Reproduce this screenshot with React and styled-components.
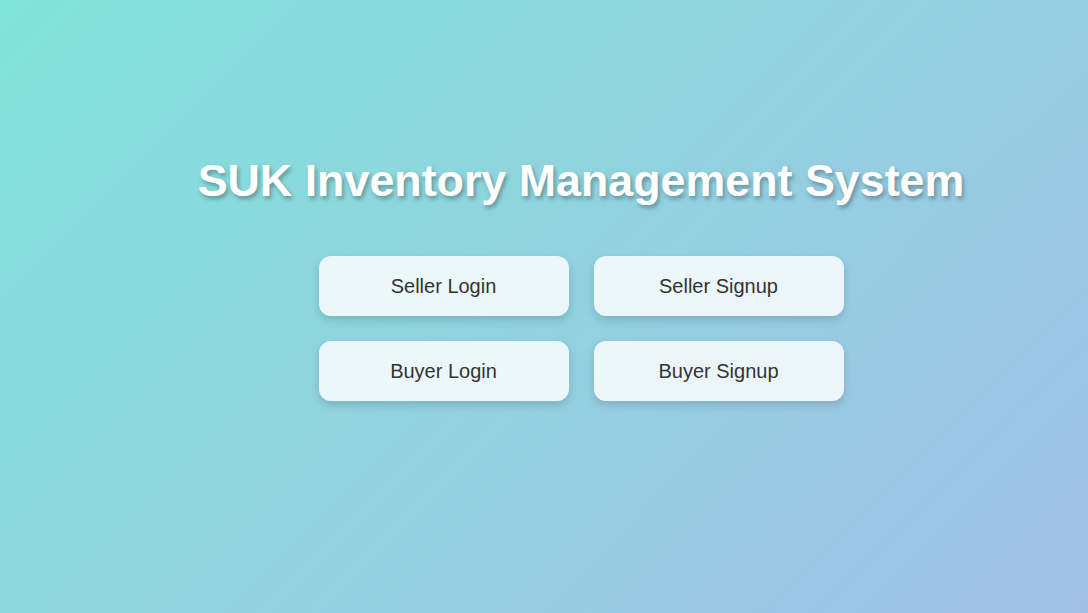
import React from "react";
import styled, { createGlobalStyle } from "styled-components";

const GlobalStyle = createGlobalStyle`
  html, body {
    margin: 0;
    padding: 0;
  }
  body {
    font-family: "Liberation Sans", Arial, sans-serif;
  }
`;

const Page = styled.div`
  min-height: 100vh;
  box-sizing: border-box;
  padding: 154px 0 0 74px;
  background: linear-gradient(135deg, #81e3d9 0%, #a2c0e6 100%);
  display: flex;
  flex-direction: column;
  align-items: center;
`;

const Title = styled.h1`
  margin: 0;
  font-size: 44.8px;
  line-height: 52px;
  font-weight: bold;
  color: #ffffff;
  text-align: center;
  text-shadow: 2px 3px 4px rgba(0, 0, 0, 0.3);
`;

const ButtonGrid = styled.div`
  margin-top: 50px;
  display: grid;
  grid-template-columns: repeat(2, 250px);
  gap: 25px;
`;

const NavButton = styled.button`
  height: 60px;
  border: none;
  border-radius: 12px;
  background: rgba(255, 255, 255, 0.82);
  color: #333333;
  font-family: "Liberation Sans", Arial, sans-serif;
  font-size: 20px;
  cursor: pointer;
  box-shadow: 0 4px 8px rgba(0, 0, 0, 0.15);

  &:hover {
    background: #ffffff;
  }
`;

const buttons = ["Seller Login", "Seller Signup", "Buyer Login", "Buyer Signup"];

export default function App() {
  return (
    <>
      <GlobalStyle />
      <Page>
        <Title>SUK Inventory Management System</Title>
        <ButtonGrid>
          {buttons.map((label) => (
            <NavButton key={label}>{label}</NavButton>
          ))}
        </ButtonGrid>
      </Page>
    </>
  );
}
